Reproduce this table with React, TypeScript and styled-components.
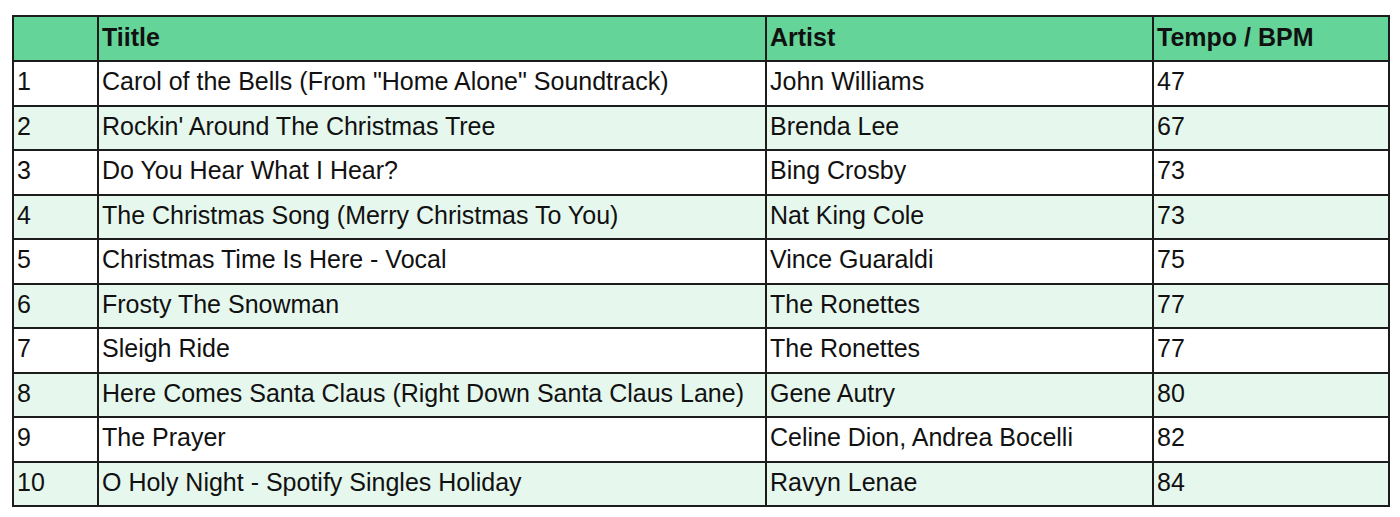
import React from "react";
import styled, { createGlobalStyle } from "styled-components";

const Global = createGlobalStyle`
  html, body { margin: 0; padding: 0; background: #ffffff; }
  body { font-family: "Liberation Sans", Arial, sans-serif; }
`;

const Page = styled.div`
  padding: 15px 0 0 12px;
`;

const Table = styled.table`
  border-collapse: collapse;
  table-layout: fixed;
  width: 1376px;
  font-family: "Liberation Sans", Arial, sans-serif;
  font-size: 25px;
  color: #111;
`;

const HeadCell = styled.th<{ $w: number }>`
  width: ${(p) => p.$w}px;
  height: 45px;
  background: #64d499;
  border: 2px solid #1c1c1c;
  text-align: left;
  font-weight: bold;
  padding: 0 3px 2px 3px;
  box-sizing: border-box;
  vertical-align: middle;
`;

const Row = styled.tr<{ $alt: boolean }>`
  background: ${(p) => (p.$alt ? "#e6f7ed" : "#ffffff")};
`;

const Cell = styled.td`
  height: 44.5px;
  border: 2px solid #1c1c1c;
  padding: 0 3px 3px 3px;
  box-sizing: border-box;
  vertical-align: middle;
  white-space: nowrap;
`;

const rows: [string, string, string, string][] = [
  ["1", 'Carol of the Bells (From "Home Alone" Soundtrack)', "John Williams", "47"],
  ["2", "Rockin' Around The Christmas Tree", "Brenda Lee", "67"],
  ["3", "Do You Hear What I Hear?", "Bing Crosby", "73"],
  ["4", "The Christmas Song (Merry Christmas To You)", "Nat King Cole", "73"],
  ["5", "Christmas Time Is Here - Vocal", "Vince Guaraldi", "75"],
  ["6", "Frosty The Snowman", "The Ronettes", "77"],
  ["7", "Sleigh Ride", "The Ronettes", "77"],
  ["8", "Here Comes Santa Claus (Right Down Santa Claus Lane)", "Gene Autry", "80"],
  ["9", "The Prayer", "Celine Dion, Andrea Bocelli", "82"],
  ["10", "O Holy Night - Spotify Singles Holiday", "Ravyn Lenae", "84"],
];

export default function App() {
  return (
    <Page>
      <Global />
      <Table>
        <thead>
          <tr>
            <HeadCell $w={85}></HeadCell>
            <HeadCell $w={668}>Tiitle</HeadCell>
            <HeadCell $w={387}>Artist</HeadCell>
            <HeadCell $w={236}>Tempo / BPM</HeadCell>
          </tr>
        </thead>
        <tbody>
          {rows.map((r, i) => (
            <Row key={r[0]} $alt={i % 2 === 1}>
              {r.map((c, j) => (
                <Cell key={j}>{c}</Cell>
              ))}
            </Row>
          ))}
        </tbody>
      </Table>
    </Page>
  );
}
